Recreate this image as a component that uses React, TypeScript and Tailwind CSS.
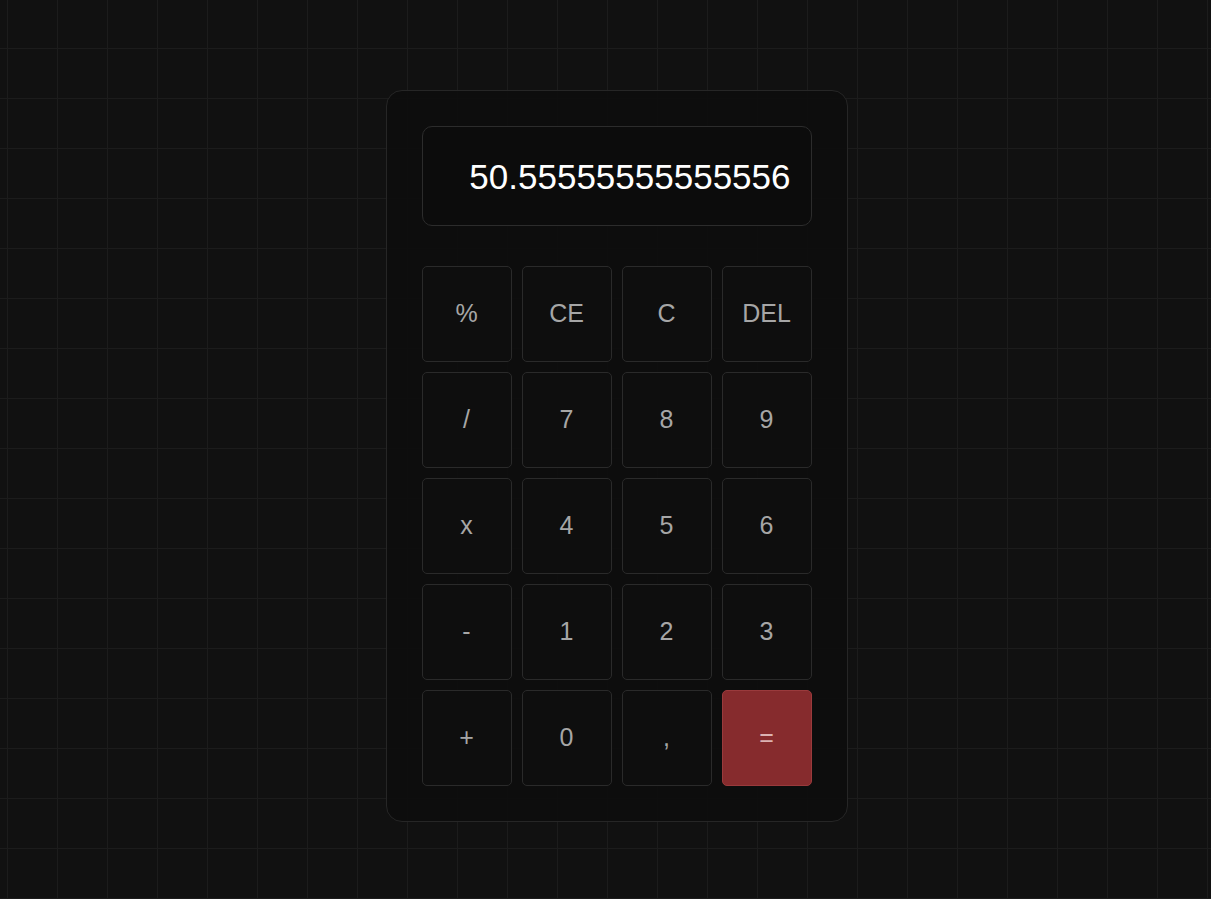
import React from "react";

const keys: string[][] = [
  ["%", "CE", "C", "DEL"],
  ["/", "7", "8", "9"],
  ["x", "4", "5", "6"],
  ["-", "1", "2", "3"],
  ["+", "0", ",", "="],
];

export default function App() {
  return (
    <div
      className="min-h-screen w-full bg-[#111111] flex justify-center pt-[90px] pl-[22px]"
      style={{
        fontFamily: '"Liberation Sans", Arial, sans-serif',
        backgroundImage:
          "linear-gradient(to right, #1c1c1c 1px, transparent 1px), linear-gradient(to bottom, #1c1c1c 1px, transparent 1px)",
        backgroundSize: "50px 50px",
        backgroundPosition: "7px 48px",
      }}
    >
      <div className="w-[462px] h-[732px] rounded-[16px] border border-[#262626] bg-[rgba(12,12,12,0.88)] p-[35px] flex flex-col gap-[40px]">
        <div className="h-[100px] rounded-[10px] border border-[#2c2c2c] bg-[#0c0c0c] flex items-center justify-end pr-[20px]">
          <span className="text-white text-[35px] leading-none">50.55555555555556</span>
        </div>
        <div className="grid grid-cols-4 gap-[10px]">
          {keys.flat().map((k) =>
            k === "=" ? (
              <button
                key={k}
                className="h-[96px] rounded-[5px] border border-[#9a3a3c] bg-[#862b2d] text-[#dcb2b2] text-[25px] flex items-center justify-center"
              >
                {k}
              </button>
            ) : (
              <button
                key={k}
                className="h-[96px] rounded-[5px] border border-[#2a2a2a] bg-[#0e0e0e] text-[#a6a6a6] text-[25px] flex items-center justify-center"
              >
                {k}
              </button>
            )
          )}
        </div>
      </div>
    </div>
  );
}
